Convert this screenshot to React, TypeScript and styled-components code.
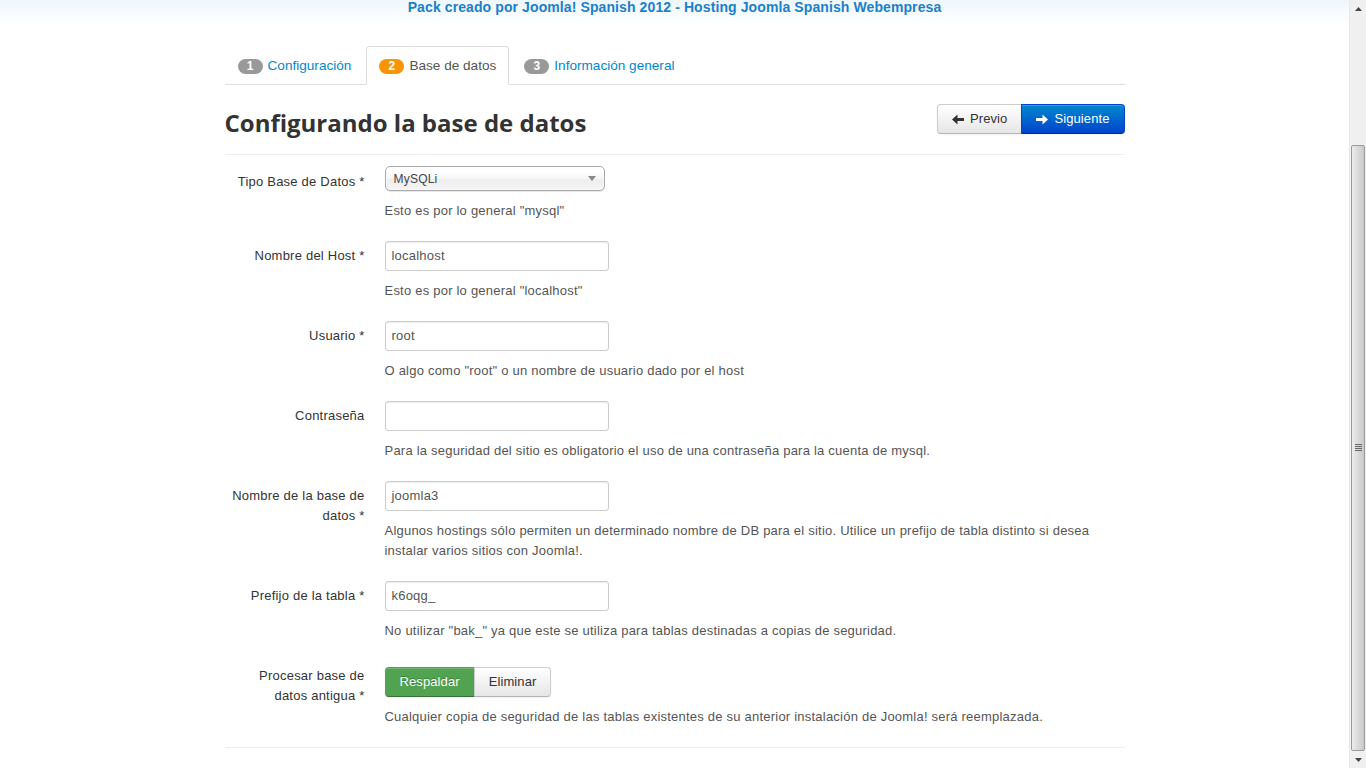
import React from 'react'
import styled, { createGlobalStyle, css } from 'styled-components'

const GlobalStyle = createGlobalStyle`
  html, body {
    margin: 0;
    padding: 0;
    overflow: hidden;
  }
  body {
    font-family: 'Liberation Sans', Arial, sans-serif;
    font-size: 13px;
    line-height: 20px;
    letter-spacing: 0.22px;
    color: #333;
    background: #fff;
  }
`

const Screen = styled.div`
  display: flex;
  width: 1366px;
  height: 768px;
  overflow: hidden;
`

const Page = styled.div`
  flex: 1;
  display: flex;
  flex-direction: column;
  min-width: 0;
`

const Banner = styled.div`
  height: 26px;
  background: linear-gradient(to bottom, #eef7fd, #ffffff);
  text-align: center;
  font-weight: bold;
  font-size: 14px;
  line-height: 14px;
  letter-spacing: 0.1px;
  color: #1a80c8;
`

const Container = styled.div`
  width: 900px;
  margin: 20px auto 0;
`

const Tabs = styled.ul`
  display: flex;
  list-style: none;
  margin: 0;
  padding: 0;
  border-bottom: 1px solid #ddd;
`

const Tab = styled.li<{ $active?: boolean }>`
  margin-bottom: -1px;
  margin-right: 2px;
  padding: 9px 12px 8px 12px;
  line-height: 20px;
  font-size: 13.6px;
  letter-spacing: 0;
  border: 1px solid transparent;
  border-radius: 4px 4px 0 0;
  color: #0088cc;
  display: flex;
  align-items: center;
  gap: 5px;
  ${p =>
    p.$active &&
    css`
      color: #555;
      background: #fff;
      border-color: #ddd #ddd transparent;
    `}
`

const Badge = styled.span<{ $orange?: boolean }>`
  display: inline-block;
  min-width: 11px;
  padding: 0 7px;
  height: 15px;
  line-height: 15px;
  border-radius: 8px;
  font-size: 12px;
  font-weight: bold;
  color: #fff;
  text-align: center;
  background: ${p => (p.$orange ? '#f89406' : '#999')};
`

const HeadRow = styled.div`
  display: flex;
  justify-content: space-between;
  align-items: flex-start;
  padding: 20px 0 0;
  border-bottom: 1px solid #eee;
  height: 49px;
`

const Title = styled.h3`
  margin: 3px 0 0;
  font-family: 'Open Sans', 'Liberation Sans', sans-serif;
  font-size: 24px;
  line-height: 30px;
  font-weight: bold;
  letter-spacing: 0;
  color: #333;
`

const BtnGroup = styled.div<{ $offset?: number }>`
  display: flex;
  margin-top: ${p => p.$offset ?? 0}px;
`

const Btn = styled.button<{ $variant?: 'primary' | 'success' | 'default'; $first?: boolean; $last?: boolean }>`
  font-family: inherit;
  font-size: 13px;
  line-height: 20px;
  letter-spacing: 0.1px;
  padding: 4px 14px;
  display: inline-flex;
  align-items: center;
  gap: 6px;
  border: 1px solid #ccc;
  border-bottom-color: #b3b3b3;
  color: #333;
  background: linear-gradient(to bottom, #ffffff, #e6e6e6);
  box-shadow: inset 0 1px 0 rgba(255, 255, 255, 0.2), 0 1px 2px rgba(0, 0, 0, 0.05);
  border-radius: ${p =>
    p.$first ? '4px 0 0 4px' : p.$last ? '0 4px 4px 0' : '4px'};
  margin-left: ${p => (p.$first ? '0' : '-1px')};
  cursor: pointer;
  ${p =>
    p.$variant === 'primary' &&
    css`
      color: #fff;
      background: linear-gradient(to bottom, #0088cc, #0044cc);
      border-color: #0044cc #0044cc #002a80;
    `}
  ${p =>
    p.$variant === 'success' &&
    css`
      color: #fff;
      background: #51a351;
      border-color: #51a351 #51a351 #387038;
      text-shadow: 0 -1px 0 rgba(0, 0, 0, 0.25);
    `}
`

const Form = styled.div`
  padding-top: 11px;
  border-bottom: 1px solid #eee;
`

const Group = styled.div`
  display: flex;
  margin-bottom: 20px;
`

const Label = styled.label<{ $top?: number }>`
  width: 140px;
  flex-shrink: 0;
  text-align: right;
  padding-top: ${p => p.$top ?? 5}px;
  margin-right: 20px;
  line-height: 20px;
  font-size: 13px;
  color: #333;
`

const Controls = styled.div`
  display: flex;
  flex-direction: column;
  align-items: flex-start;
`

const Input = styled.div`
  box-sizing: border-box;
  width: 224px;
  height: 30px;
  padding: 4px 6px;
  line-height: 20px;
  font-size: 13px;
  color: #555;
  border: 1px solid #ccc;
  border-radius: 3px;
  box-shadow: inset 0 1px 1px rgba(0, 0, 0, 0.075);
  background: #fff;
`

const Select = styled.div`
  box-sizing: border-box;
  width: 220px;
  height: 25px;
  padding: 0 8px;
  display: flex;
  align-items: center;
  justify-content: space-between;
  font-size: 12px;
  color: #444;
  border: 1px solid #aaa;
  border-radius: 5px;
  background: linear-gradient(to bottom, #ffffff 20%, #f6f6f6 50%, #eeeeee 52%, #f4f4f4 100%);
  box-shadow: 0 0 3px #fff inset, 0 1px 1px rgba(0, 0, 0, 0.1);
`

const Caret = styled.span`
  width: 0;
  height: 0;
  border-left: 4px solid transparent;
  border-right: 4px solid transparent;
  border-top: 5px solid #888;
`

const Help = styled.p`
  margin: 10px 0 0;
  line-height: 20px;
  font-size: 13px;
  color: #555;
  max-width: 740px;
`

const ScrollBar = styled.div`
  width: 17px;
  flex-shrink: 0;
  display: flex;
  flex-direction: column;
  background: #f0f0f0;
  border-left: 1px solid #e8e8e8;
  box-sizing: border-box;
`

const ScrollArrow = styled.div`
  height: 17px;
  display: flex;
  align-items: center;
  justify-content: center;
`

const ScrollTrack = styled.div`
  flex: 1;
  display: flex;
  flex-direction: column;
  padding-top: 128px;
`

const Thumb = styled.div`
  flex: 1;
  margin: 0 1px;
  border: 1px solid #9c9c9c;
  border-radius: 2px;
  background: linear-gradient(to right, #ececec, #dcdcdc 45%, #c9c9c9);
  display: flex;
  align-items: center;
  justify-content: center;
`

const Grip = () => (
  <svg width="7" height="8" viewBox="0 0 7 8">
    {[0, 2, 4, 6].map(y => (
      <rect key={y} x="0" y={y} width="7" height="1" fill="#666" />
    ))}
  </svg>
)

const Tri = ({ up }: { up?: boolean }) => (
  <svg width="7" height="4" viewBox="0 0 7 4">
    <polygon points={up ? '3.5,0 7,4 0,4' : '0,0 7,0 3.5,4'} fill="#444" />
  </svg>
)

const ArrowIcon = ({ left, color }: { left?: boolean; color: string }) => (
  <svg width="12" height="11" viewBox="0 0 12 11" style={{ transform: left ? 'scaleX(-1)' : undefined }}>
    <path d="M0 4h6.5V0.5L12 5.5 6.5 10.5V7H0z" fill={color} />
  </svg>
)

const fields = [
  { label: 'Nombre del Host *', value: 'localhost', help: 'Esto es por lo general "localhost"' },
  { label: 'Usuario *', value: 'root', help: 'O algo como "root" o un nombre de usuario dado por el host' },
  {
    label: 'Contraseña',
    value: '',
    help: 'Para la seguridad del sitio es obligatorio el uso de una contraseña para la cuenta de mysql.',
  },
  {
    label: 'Nombre de la base de datos *',
    value: 'joomla3',
    help: 'Algunos hostings sólo permiten un determinado nombre de DB para el sitio. Utilice un prefijo de tabla distinto si desea instalar varios sitios con Joomla!.',
  },
  {
    label: 'Prefijo de la tabla *',
    value: 'k6oqg_',
    help: 'No utilizar "bak_" ya que este se utiliza para tablas destinadas a copias de seguridad.',
  },
]

export default function App() {
  return (
    <Screen>
      <GlobalStyle />
      <Page>
        <Banner>Pack creado por Joomla! Spanish 2012 - Hosting Joomla Spanish Webempresa</Banner>
        <Container>
          <Tabs>
            <Tab>
              <Badge>1</Badge> Configuración
            </Tab>
            <Tab $active>
              <Badge $orange>2</Badge> Base de datos
            </Tab>
            <Tab>
              <Badge>3</Badge> Información general
            </Tab>
          </Tabs>

          <HeadRow>
            <Title>Configurando la base de datos</Title>
            <BtnGroup $offset={-1}>
              <Btn $first>
                <ArrowIcon left color="#333" /> Previo
              </Btn>
              <Btn $last $variant="primary">
                <ArrowIcon color="#fff" /> Siguiente
              </Btn>
            </BtnGroup>
          </HeadRow>

          <Form>
            <Group>
              <Label $top={6}>Tipo Base de Datos *</Label>
              <Controls>
                <Select>
                  <span>MySQLi</span>
                  <Caret />
                </Select>
                <Help>Esto es por lo general "mysql"</Help>
              </Controls>
            </Group>

            {fields.map(f => (
              <Group key={f.label}>
                <Label>{f.label}</Label>
                <Controls>
                  <Input>{f.value}</Input>
                  <Help>{f.help}</Help>
                </Controls>
              </Group>
            ))}

            <Group>
              <Label>Procesar base de datos antigua *</Label>
              <Controls>
                <BtnGroup $offset={6}>
                  <Btn $first $variant="success">Respaldar</Btn>
                  <Btn $last>Eliminar</Btn>
                </BtnGroup>
                <Help>
                  Cualquier copia de seguridad de las tablas existentes de su anterior instalación de Joomla! será reemplazada.
                </Help>
              </Controls>
            </Group>
          </Form>
        </Container>
      </Page>
      <ScrollBar>
        <ScrollArrow>
          <Tri up />
        </ScrollArrow>
        <ScrollTrack>
          <Thumb>
            <Grip />
          </Thumb>
        </ScrollTrack>
        <ScrollArrow>
          <Tri />
        </ScrollArrow>
      </ScrollBar>
    </Screen>
  )
}
